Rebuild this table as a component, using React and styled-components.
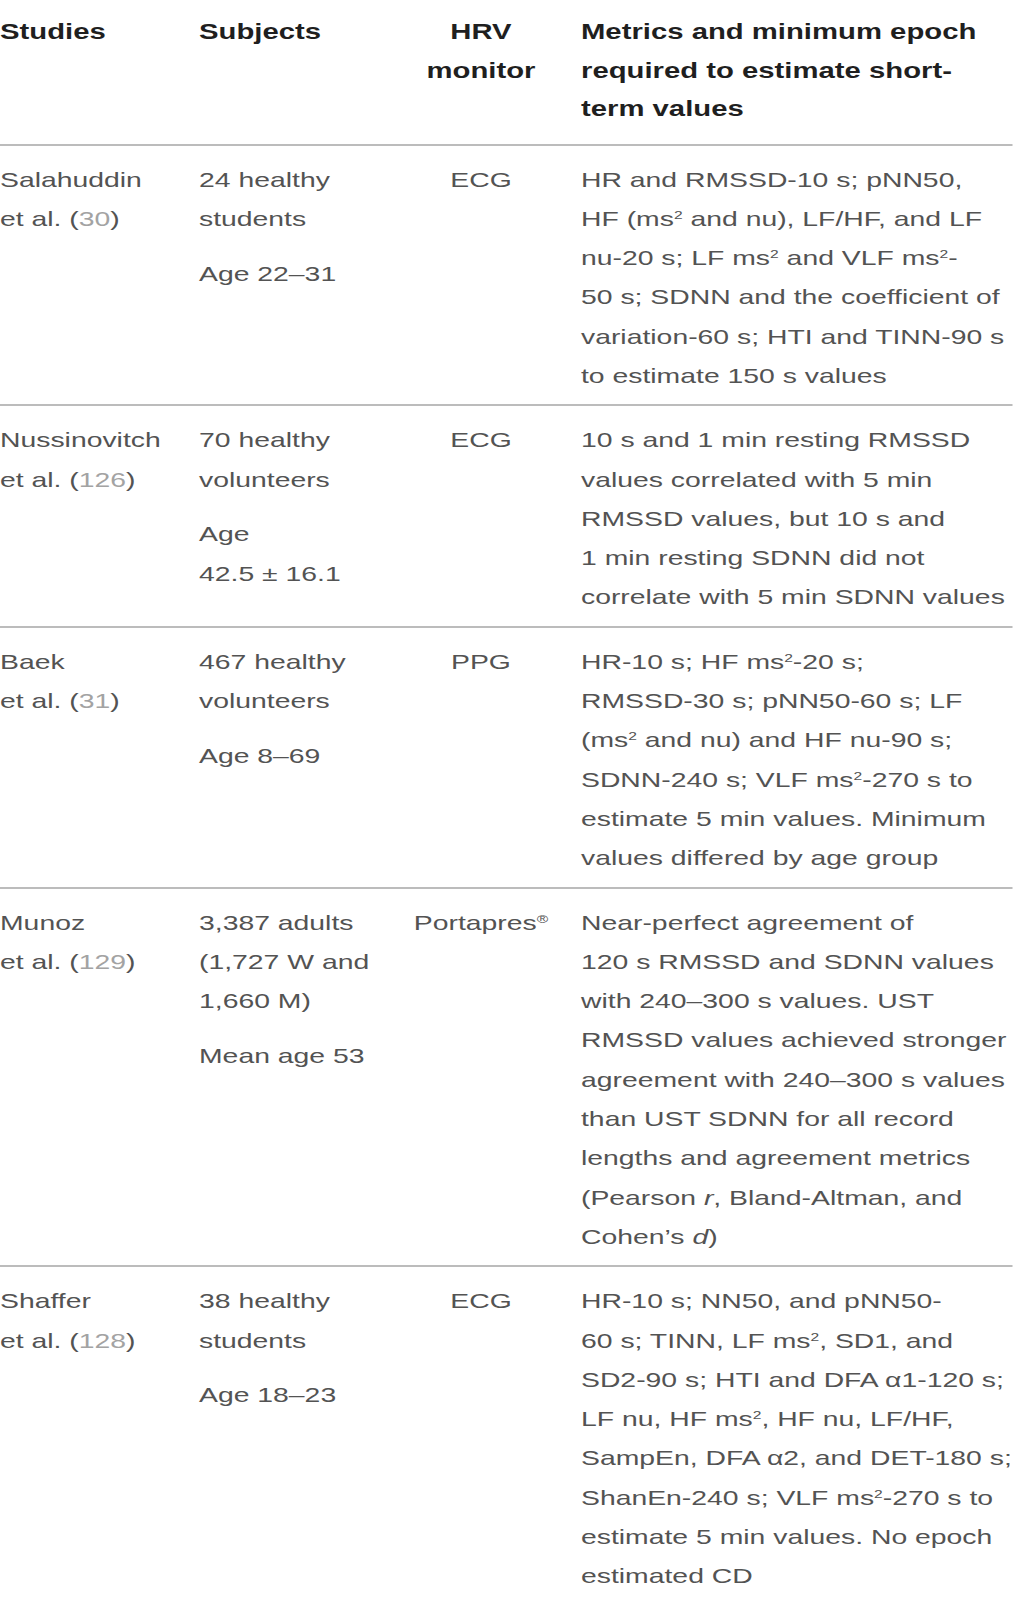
import React from 'react';
import styled, { createGlobalStyle } from 'styled-components';

// the source picture is stretched sideways; the table is laid out narrow and widened
const STRETCH = 1.35;
const px = n => `${(n / STRETCH).toFixed(2)}px`;

const GlobalStyle = createGlobalStyle`
  html, body {
    margin: 0;
    padding: 0;
    background: #ffffff;
  }
  body {
    font-family: "Liberation Sans", Arial, Helvetica, sans-serif;
    -webkit-font-smoothing: antialiased;
  }
`;

const Table = {
  Frame: styled.div`
    width: ${px(1013)};
    transform: scaleX(${STRETCH});
    transform-origin: 0 0;
  `,
  Row: styled.div`
    display: grid;
    grid-template-columns: ${px(199)} ${px(197)} ${px(170)} 1fr;
    padding: ${props => (props.head ? '13px 0 15px' : '14px 0 9px')};
    border-top: ${props => (props.head ? 'none' : '2px solid #bcbcbc')};
    font-size: ${props => (props.head ? '21.7px' : '21px')};
    font-weight: ${props => (props.head ? 700 : 400)};
    line-height: ${props => (props.head ? '38.5px' : '39.3px')};
    color: ${props => (props.head ? '#1f1f1f' : '#535353')};
  `,
  Cell: styled.div`
    display: flex;
    flex-direction: column;
    text-align: ${props => (props.center ? 'center' : 'left')};
    padding-left: ${props => (props.wide ? px(15) : '0')};
  `,
  Block: styled.div`
    & + & {
      margin-top: 15.5px;
    }
  `,
  Line: styled.span`
    display: block;
    white-space: nowrap;
  `,
  Ref: styled.span`
    color: #a3a3a3;
  `,
  Sup: styled.sup`
    font-size: 0.55em;
    line-height: 0;
    vertical-align: 0.65em;
  `,
};

const sq = <Table.Sup>2</Table.Sup>;

const rows = [
  {
    study: ['Salahuddin', <>et al. (<Table.Ref>30</Table.Ref>)</>],
    subjects: [['24 healthy', 'students'], ['Age 22–31']],
    monitor: 'ECG',
    metrics: [
      'HR and RMSSD-10 s; pNN50,',
      <>HF (ms{sq} and nu), LF/HF, and LF</>,
      <>nu-20 s; LF ms{sq} and VLF ms{sq}-</>,
      '50 s; SDNN and the coefficient of',
      'variation-60 s; HTI and TINN-90 s',
      'to estimate 150 s values',
    ],
  },
  {
    study: ['Nussinovitch', <>et al. (<Table.Ref>126</Table.Ref>)</>],
    subjects: [['70 healthy', 'volunteers'], ['Age', '42.5 ± 16.1']],
    monitor: 'ECG',
    metrics: [
      '10 s and 1 min resting RMSSD',
      'values correlated with 5 min',
      'RMSSD values, but 10 s and',
      '1 min resting SDNN did not',
      'correlate with 5 min SDNN values',
    ],
  },
  {
    study: ['Baek', <>et al. (<Table.Ref>31</Table.Ref>)</>],
    subjects: [['467 healthy', 'volunteers'], ['Age 8–69']],
    monitor: 'PPG',
    metrics: [
      <>HR-10 s; HF ms{sq}-20 s;</>,
      'RMSSD-30 s; pNN50-60 s; LF',
      <>(ms{sq} and nu) and HF nu-90 s;</>,
      <>SDNN-240 s; VLF ms{sq}-270 s to</>,
      'estimate 5 min values. Minimum',
      'values differed by age group',
    ],
  },
  {
    study: ['Munoz', <>et al. (<Table.Ref>129</Table.Ref>)</>],
    subjects: [['3,387 adults', '(1,727 W and', '1,660 M)'], ['Mean age 53']],
    monitor: <>Portapres<Table.Sup>®</Table.Sup></>,
    metrics: [
      'Near-perfect agreement of',
      '120 s RMSSD and SDNN values',
      'with 240–300 s values. UST',
      'RMSSD values achieved stronger',
      'agreement with 240–300 s values',
      'than UST SDNN for all record',
      'lengths and agreement metrics',
      <>(Pearson <i>r</i>, Bland-Altman, and</>,
      <>Cohen’s <i>d</i>)</>,
    ],
  },
  {
    study: ['Shaffer', <>et al. (<Table.Ref>128</Table.Ref>)</>],
    subjects: [['38 healthy', 'students'], ['Age 18–23']],
    monitor: 'ECG',
    metrics: [
      'HR-10 s; NN50, and pNN50-',
      <>60 s; TINN, LF ms{sq}, SD1, and</>,
      'SD2-90 s; HTI and DFA α1-120 s;',
      <>LF nu, HF ms{sq}, HF nu, LF/HF,</>,
      'SampEn, DFA α2, and DET-180 s;',
      <>ShanEn-240 s; VLF ms{sq}-270 s to</>,
      'estimate 5 min values. No epoch',
      'estimated CD',
    ],
  },
];

const renderLines = lines => lines.map((line, i) => <Table.Line key={i}>{line}</Table.Line>);

const App = () => (
  <>
    <GlobalStyle />
    <Table.Frame>
      <Table.Row head>
        <Table.Cell>{renderLines(['Studies'])}</Table.Cell>
        <Table.Cell>{renderLines(['Subjects'])}</Table.Cell>
        <Table.Cell center>{renderLines(['HRV', 'monitor'])}</Table.Cell>
        <Table.Cell wide>
          {renderLines(['Metrics and minimum epoch', 'required to estimate short-', 'term values'])}
        </Table.Cell>
      </Table.Row>
      {rows.map((row, i) => (
        <Table.Row key={i}>
          <Table.Cell>{renderLines(row.study)}</Table.Cell>
          <Table.Cell>
            {row.subjects.map((block, j) => (
              <Table.Block key={j}>{renderLines(block)}</Table.Block>
            ))}
          </Table.Cell>
          <Table.Cell center>{renderLines([row.monitor])}</Table.Cell>
          <Table.Cell wide>{renderLines(row.metrics)}</Table.Cell>
        </Table.Row>
      ))}
    </Table.Frame>
  </>
);

export default App;
